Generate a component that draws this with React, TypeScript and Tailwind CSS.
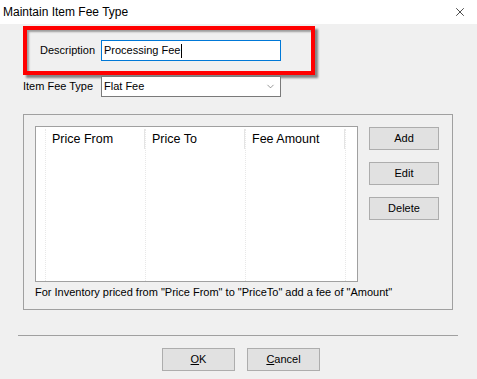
import { X, ChevronDown } from "lucide-react";

const font = { fontFamily: '"Liberation Sans", Arial, sans-serif' };

function WinButton({ children, className = "" }: { children: React.ReactNode; className?: string }) {
  return (
    <button className={`flex items-center justify-center border border-[#adadad] bg-[#e1e1e1] text-[11px] text-black ${className}`}>
      {children}
    </button>
  );
}

export default function App() {
  const columns = [
    { label: "Price From", w: "w-[100px]" },
    { label: "Price To", w: "w-[100px]" },
    { label: "Fee Amount", w: "w-[100px]" },
  ];

  return (
    <div className="h-[379px] w-[477px] overflow-hidden whitespace-nowrap bg-[#f0f0f0] text-[11px] text-black" style={font}>
      {/* title bar */}
      <div className="flex h-[24px] items-center justify-between bg-white pl-[3px] pr-[10px]">
        <span className="text-[12px] leading-none">Maintain Item Fee Type</span>
        <X className="h-[14px] w-[14px]" strokeWidth={1.2} />
      </div>

      <div className="pl-[23px] pt-[2px]">
        {/* highlighted description row */}
        <div className="flex h-[49px] w-[292px] items-center border-[4px] border-[#ff0000] pl-[13px] shadow-[inset_2px_2px_2px_rgba(0,0,0,0.35),3px_3px_2px_rgba(0,0,0,0.45)]">
          <span className="w-[61px]">Description</span>
          <div className="flex h-[21px] w-[180px] items-center border border-[#0078d7] bg-white pl-[2px]">
            Processing Fee<span className="ml-[1px] h-[14px] w-px bg-black" />
          </div>
        </div>

        {/* fee type row */}
        <div className="mt-[1px] flex items-center">
          <span className="w-[78px]">Item Fee Type</span>
          <div className="flex h-[21px] w-[180px] items-center justify-between border border-[#7a7a7a] bg-white pl-[2px] pr-[4px]">
            <span>Flat Fee</span>
            <ChevronDown className="h-[11px] w-[11px] text-[#555]" strokeWidth={1.3} />
          </div>
        </div>

        {/* group box */}
        <div className="mt-[17px] h-[196px] w-[430px] border border-[#a0a0a0] pl-[11px] pt-[11px]">
          <div className="flex">
            <div className="h-[156px] w-[323px] border border-[#a0a0a0] bg-white pt-[2px]">
              <div className="flex h-full">
                <div className="w-[10px] border-r border-dotted border-[#e8e8e8]" />
                {columns.map((c) => (
                  <div key={c.label} className={`${c.w} border-r border-dotted border-[#e8e8e8]`}>
                    <div className="flex h-[20px] items-center border-r border-[#e5e5e5] pl-[6px] text-[12.5px]">{c.label}</div>
                  </div>
                ))}
              </div>
            </div>
            <div className="ml-[11px] flex flex-col gap-[12px] pt-[1px]">
              <WinButton className="h-[23px] w-[70px]">Add</WinButton>
              <WinButton className="h-[23px] w-[70px]">Edit</WinButton>
              <WinButton className="h-[23px] w-[70px]">Delete</WinButton>
            </div>
          </div>
          <div className="mt-[2px] leading-[16px]">
            For Inventory priced from "Price From" to "PriceTo" add a fee of "Amount"
          </div>
        </div>
      </div>

      {/* separator */}
      <div className="ml-[18px] mt-[25px] h-px w-[440px] bg-[#a0a0a0]" />

      <div className="mt-[12px] flex justify-center gap-[12px] pl-[5px]">
        <WinButton className="h-[23px] w-[73px]">
          <span className="underline">O</span>K
        </WinButton>
        <WinButton className="h-[23px] w-[73px]">
          <span className="underline">C</span>ancel
        </WinButton>
      </div>
    </div>
  );
}
